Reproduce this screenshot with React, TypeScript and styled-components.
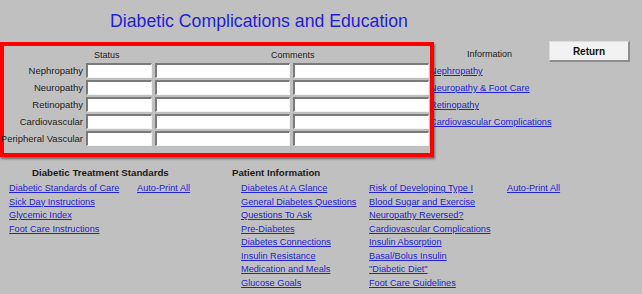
import { Fragment } from "react";
import styled, { createGlobalStyle } from "styled-components";

const GlobalStyle = createGlobalStyle`
  html, body {
    margin: 0;
    padding: 0;
    background: #c0c0c0;
  }
  body {
    font-family: "Liberation Sans", Arial, sans-serif;
  }
`;

const Page = styled.div`
  width: 642px;
  height: 294px;
  background: #c0c0c0;
  overflow: hidden;
`;

const Title = styled.h1`
  margin: 0;
  padding: 11px 0 0 110px;
  height: 31px;
  box-sizing: border-box;
  font-size: 17.7px;
  font-weight: normal;
  color: #1f1fd6;
  line-height: 20px;
`;

const TopRow = styled.div`
  display: flex;
  align-items: flex-start;
  margin-top: 11px;
`;

const Panel = styled.div`
  position: relative;
  z-index: 1;
  width: 434px;
  height: 115px;
  box-sizing: border-box;
  border: 4px solid #f00;
  box-shadow: 1px 2px 2px rgba(0, 0, 0, 0.45);
  padding: 4px 0 0 0;
  display: grid;
  grid-template-columns: 79px 66px 135px 136px;
  grid-auto-rows: 15px;
  grid-template-rows: 11px;
  column-gap: 3px;
  row-gap: 2px;
  align-items: center;
`;

const ColHead = styled.div<{ $col: number; $offset: number }>`
  grid-column: ${(p) => p.$col};
  padding-left: ${(p) => p.$offset}px;
  font-size: 9px;
  color: #222;
  line-height: 11px;
  white-space: nowrap;
`;

const RowLabel = styled.label`
  grid-column: 1;
  text-align: right;
  font-size: 9.5px;
  color: #222;
  white-space: nowrap;
  margin-left: -8px;
`;

const Field = styled.input`
  width: 100%;
  height: 15px;
  box-sizing: border-box;
  margin: 0;
  padding: 0;
  background: #fff;
  border: 1px solid #f4f4f4;
  border-top: 2px solid #7a7a7a;
  border-left: 2px solid #7a7a7a;
  outline: none;
`;

const InfoCol = styled.div`
  margin-left: -4px;
  width: 106px;
  display: flex;
  flex-direction: column;
  padding-top: 7px;
`;

const InfoHead = styled.div`
  font-size: 9px;
  color: #222;
  padding-left: 37px;
  height: 17px;
  line-height: 11px;
`;

const LinkList = styled.div<{ $gap: number }>`
  display: flex;
  flex-direction: column;
  row-gap: ${(p) => p.$gap}px;
`;

const Link = styled.a`
  font-size: 9.2px;
  line-height: 11px;
  color: #2323d4;
  text-decoration: underline;
  white-space: nowrap;
  cursor: pointer;
`;

const ReturnButton = styled.button`
  margin-left: 13px;
  margin-top: -1px;
  width: 81px;
  height: 21px;
  background: #f2f2f2;
  border: 1px solid #dcdcdc;
  border-right: 2px solid #8e8e8e;
  border-bottom: 2px solid #8e8e8e;
  font-family: "Liberation Sans", Arial, sans-serif;
  font-weight: bold;
  font-size: 10px;
  color: #111;
  padding: 0;
`;

const Bottom = styled.div`
  display: flex;
  margin-top: 9px;
`;

const Section = styled.div<{ $width: number }>`
  width: ${(p) => p.$width}px;
  display: flex;
  flex-direction: column;
`;

const SectionHead = styled.div<{ $indent: number }>`
  font-size: 9.7px;
  font-weight: bold;
  color: #1a1a1a;
  padding-left: ${(p) => p.$indent}px;
  height: 17px;
  line-height: 13px;
`;

const LinkGrid = styled.div<{ $cols: string; $indent: number }>`
  display: grid;
  grid-template-columns: ${(p) => p.$cols};
  padding-left: ${(p) => p.$indent}px;
  align-items: start;
`;

const rows = ["Nephropathy", "Neuropathy", "Retinopathy", "Cardiovascular", "Peripheral Vascular"];

const infoLinks = ["Nephropathy", "Neuropathy & Foot Care", "Retinopathy", "Cardiovascular Complications"];

const standards = ["Diabetic Standards of Care", "Sick Day Instructions", "Glycemic Index", "Foot Care Instructions"];

const patientA = [
  "Diabetes At A Glance",
  "General Diabetes Questions",
  "Questions To Ask",
  "Pre-Diabetes",
  "Diabetes Connections",
  "Insulin Resistance",
  "Medication and Meals",
  "Glucose Goals",
];

const patientB = [
  "Risk of Developing Type I",
  "Blood Sugar and Exercise",
  "Neuropathy Reversed?",
  "Cardiovascular Complications",
  "Insulin Absorption",
  "Basal/Bolus Insulin",
  "\"Diabetic Diet\"",
  "Foot Care Guidelines",
];

const App = () => {
  return (
    <Page>
      <GlobalStyle />
      <Title>Diabetic Complications and Education</Title>
      <TopRow>
        <Panel>
          <ColHead $col={2} $offset={8}>Status</ColHead>
          <ColHead $col={3} $offset={116}>Comments</ColHead>
          {rows.map((r) => (
            <Fragment key={r}>
              <RowLabel>{r}</RowLabel>
              <Field />
              <Field />
              <Field />
            </Fragment>
          ))}
        </Panel>
        <InfoCol>
          <InfoHead>Information</InfoHead>
          <LinkList $gap={6}>
            {infoLinks.map((l) => (
              <Link key={l}>{l}</Link>
            ))}
          </LinkList>
        </InfoCol>
        <ReturnButton>Return</ReturnButton>
      </TopRow>
      <Bottom>
        <Section $width={232}>
          <SectionHead $indent={32}>Diabetic Treatment Standards</SectionHead>
          <LinkGrid $cols="128px auto" $indent={9}>
            <LinkList $gap={2.5}>
              {standards.map((l) => (
                <Link key={l}>{l}</Link>
              ))}
            </LinkList>
            <Link>Auto-Print All</Link>
          </LinkGrid>
        </Section>
        <Section $width={400}>
          <SectionHead $indent={0}>Patient Information</SectionHead>
          <LinkGrid $cols="128px 138px auto" $indent={9}>
            <LinkList $gap={2.5}>
              {patientA.map((l) => (
                <Link key={l}>{l}</Link>
              ))}
            </LinkList>
            <LinkList $gap={2.5}>
              {patientB.map((l) => (
                <Link key={l}>{l}</Link>
              ))}
            </LinkList>
            <Link>Auto-Print All</Link>
          </LinkGrid>
        </Section>
      </Bottom>
    </Page>
  );
};

export default App;
